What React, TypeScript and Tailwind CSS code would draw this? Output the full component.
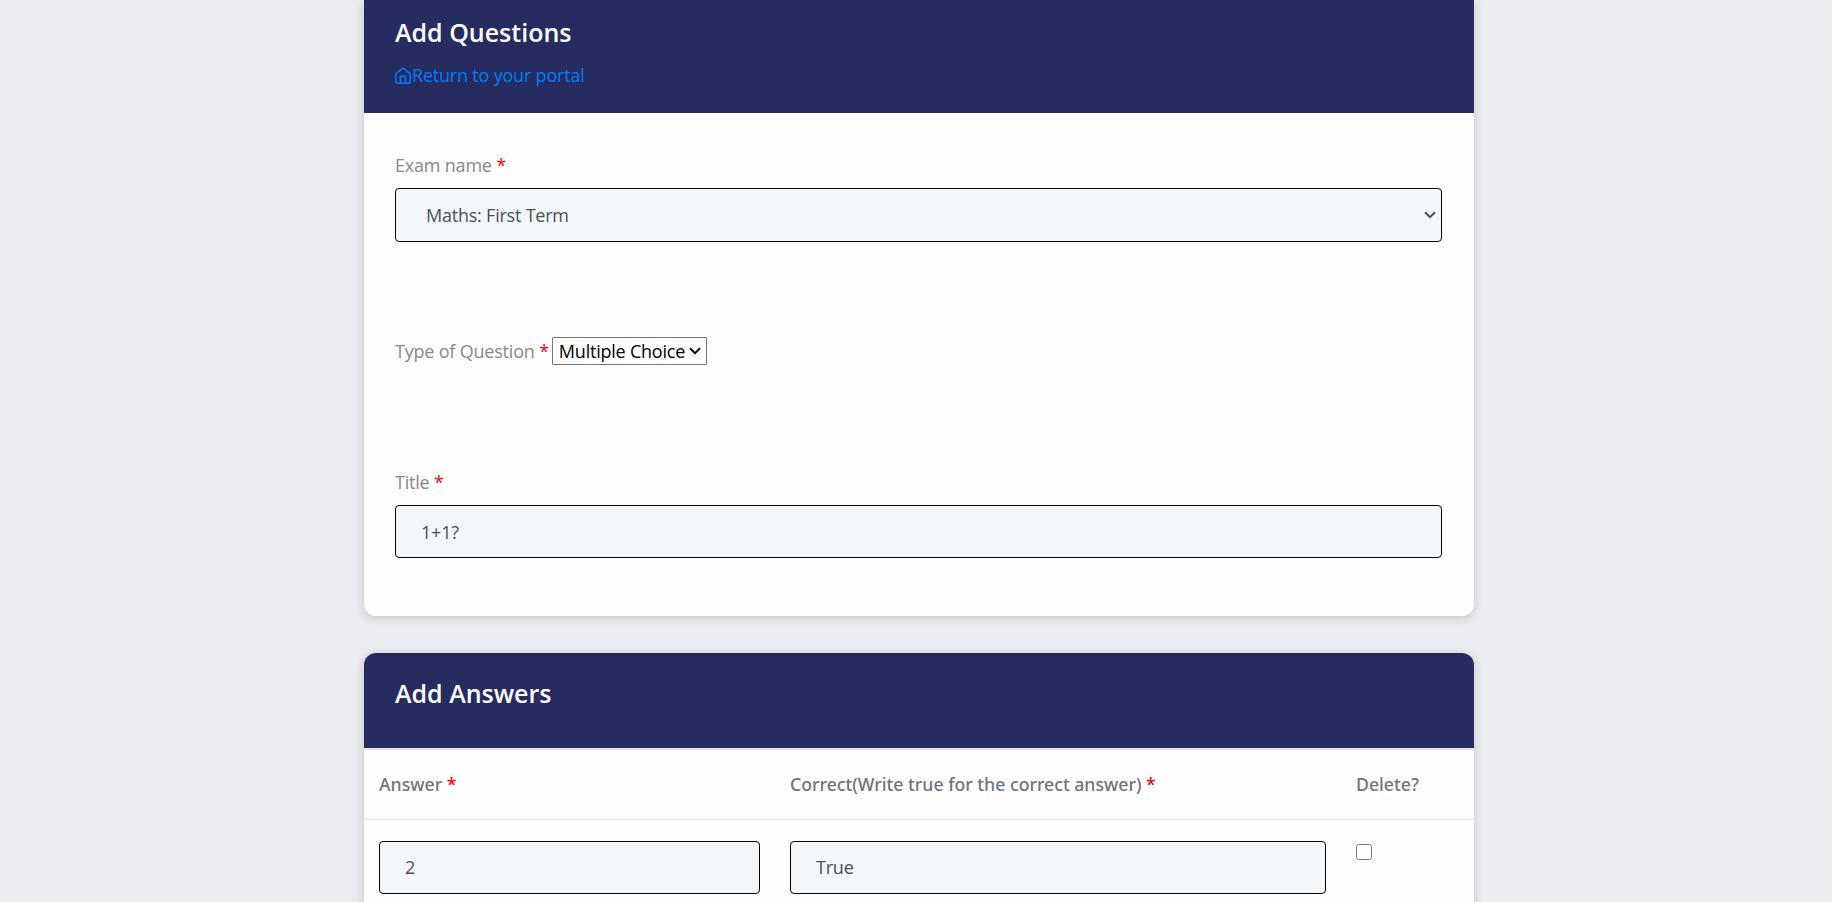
import type { ReactNode } from "react";

const Star = () => <span className="text-[#ff0000]">*</span>;

const HomeIcon = () => (
  <svg width="18" height="18" viewBox="0 0 18 18" fill="none" stroke="currentColor" strokeWidth="1.6" strokeLinejoin="round" className="-ml-px shrink-0">
    <path d="M1.800 6.600 9 1.200 16.200 6.600V14.600a1.700 1.700 0 0 1-1.700 1.700H3.500A1.700 1.700 0 0 1 1.800 14.600Z" />
    <path d="M6.300 16.200V9.200h5.200v7" />
  </svg>
);

const Chevron = () => (
  <svg width="12" height="8" viewBox="0 0 12 8" fill="none" stroke="currentColor" strokeWidth="2" className="shrink-0">
    <path d="M1 1.200 6 6.200 11 1.200" />
  </svg>
);

const Label = ({ children }: { children: ReactNode }) => (
  <label className="block text-[18px] leading-[27px] tracking-[-0.2px] text-[#888888]">
    {children} <Star />
  </label>
);

const Field = ({ value, className }: { value: string; className: string }) => (
  <input
    defaultValue={value}
    className={`block h-[53px] rounded-[4px] border border-black bg-[#f3f7fa] px-[25px] text-[18px] tracking-[-0.2px] text-[#495057] outline-none ${className}`}
  />
);

export default function App() {
  return (
    <main className="h-[902px] overflow-hidden bg-[#e9ebee] font-['Open_Sans',sans-serif] font-normal">
      <div className="ml-[364px] w-[1110px]">
        <section className="h-[616px] overflow-hidden rounded-b-[12px] bg-[#fefefe] shadow-[0_2px_8px_rgba(0,0,0,0.16)]">
          <header className="h-[113px] bg-[#262c5f] pl-[31px] pt-[16px]">
            <h1 className="text-[25px] leading-[32px] font-semibold text-white">Add Questions</h1>
            <a className="mt-[14px] flex items-center text-[18px] leading-[27px] tracking-[-0.2px] text-[#007bff]">
              <HomeIcon />
              Return to your portal
            </a>
          </header>
          <div className="px-[31px] pt-[39px]">
            <Label>Exam name</Label>
            <div className="mt-[9px] flex h-[54px] w-[1047px] items-center justify-between rounded-[4px] border border-black bg-[#f3f7fa] pl-[30px] pr-[5px] text-[18px] tracking-[-0.22px] text-[#495057]">
              Maths: First Term
              <Chevron />
            </div>
            <div className="mt-[95px] flex h-[28px] items-center gap-[3px]">
              <Label>Type of Question</Label>
              <div className="flex h-[28px] w-[155px] items-center justify-between rounded-[1px] border border-[#767676] bg-white pl-[6px] pr-[5px] text-[18px] tracking-[-0.22px] whitespace-nowrap text-black">
                Multiple Choice
                <Chevron />
              </div>
            </div>
            <div className="mt-[104px]">
              <Label>Title</Label>
              <Field value="1+1?" className="mt-[9px] w-[1047px]" />
            </div>
          </div>
        </section>

        <section className="mt-[37px] h-[400px] overflow-hidden rounded-t-[12px] bg-[#fefefe] shadow-[0_2px_8px_rgba(0,0,0,0.16)]">
          <header className="h-[95px] bg-[#262c5f] pl-[31px] pt-[24px]">
            <h2 className="text-[25px] leading-[32px] font-semibold text-white">Add Answers</h2>
          </header>
          <div className="grid h-[72px] grid-cols-[411px_566px_1fr] items-center border-b border-t-2 border-[#e6e7e9] pl-[15px] font-['Noto_Sans',sans-serif] text-[17.7px] font-medium text-[#6c757d]">
            <span>Answer <Star /></span>
            <span>Correct(Write true for the correct answer) <Star /></span>
            <span>Delete?</span>
          </div>
          <div className="grid grid-cols-[411px_566px_1fr] pl-[15px] pt-[21px]">
            <Field value="2" className="w-[381px] pb-[2px]" />
            <Field value="True" className="w-[536px] pb-[2px]" />
            <input type="checkbox" className="mt-[3px] size-[15.5px]" />
          </div>
        </section>
      </div>
    </main>
  );
}
